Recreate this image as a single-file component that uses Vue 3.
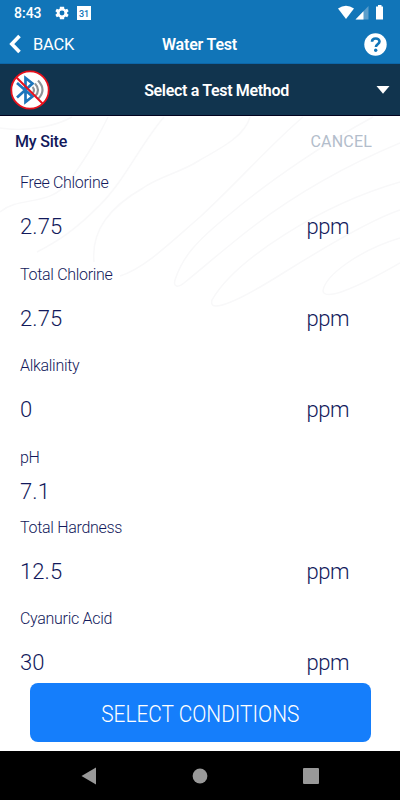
<template>
  <div class="screen">
    <div class="status-bar">
      <span class="clock">8:43</span>
      <svg class="gear" width="14" height="14" viewBox="2 2 20 20">
        <path fill="#fff" fill-rule="evenodd" d="M19.4 13a7.5 7.5 0 0 0 0-2l2.1-1.600-2-3.500-2.500 1a7.500 7.500 0 0 0-1.700-1L15 3.200H9L8.700 5.900a7.500 7.500 0 0 0-1.700 1l-2.500-1-2 3.500L4.600 11a7.500 7.500 0 0 0 0 2l-2.100 1.600 2 3.500 2.500-1a7.500 7.500 0 0 0 1.700 1l.3 2.700h6l.3-2.700a7.500 7.500 0 0 0 1.700-1l2.500 1 2-3.500zM12 8.500a3.500 3.500 0 1 1 0 7 3.500 3.500 0 0 1 0-7z" />
      </svg>
      <span class="calendar">31</span>
      <svg class="signals" width="48" height="16" viewBox="0 0 48 16">
        <path fill="#fff" d="M0 3.500Q8 -2.200 16 3.500L8 14z" />
        <path fill="#5c9ecb" d="M30.500 1v13.500H17.500z" />
        <path fill="#fff" d="M25.500 6.300v8.200h-8z" />
        <path fill="#fff" d="M38 1.500h2V0h3.500v1.500h1.500v13h-7z" />
      </svg>
    </div>

    <header class="nav-bar">
      <button class="back">
        <svg width="12" height="20" viewBox="0 0 12 20"><path d="M10.500 2L2.800 10l7.700 8" fill="none" stroke="#fff" stroke-width="3.600" /></svg>
        <span>BACK</span>
      </button>
      <h1>Water Test</h1>
      <button class="help">
        <svg width="23" height="23" viewBox="0 0 23 23">
          <circle cx="11.500" cy="11.500" r="11.200" fill="#fff" />
          <path d="M8 8.700C8 4.400 15.500 4.400 15.500 8.500c0 2.700-3.600 2.900-3.600 5.500" fill="none" stroke="#1175b8" stroke-width="2.600" />
          <circle cx="11.700" cy="17.300" r="1.700" fill="#1175b8" />
        </svg>
      </button>
    </header>

    <div class="method-bar">
      <svg class="bluetooth" width="40" height="40" viewBox="0 0 40 40">
        <circle cx="20" cy="20" r="18.700" fill="#fff" stroke="#e8101c" stroke-width="1.800" />
        <path d="M7 13l15.500 13.500-7 5.500V8l7 5.500L7 27.500" fill="none" stroke="#1c75bc" stroke-width="2.700" />
        <g fill="none" stroke="#8d9297" stroke-width="2.100">
          <path d="M22.500 17q3 3 0 6.500" />
          <path d="M25 13.500q6 6.500 0 13" />
          <path d="M28 10.500q9 9.500 0 18.500" />
        </g>
        <path d="M6.800 7.800l26 26" stroke="#e8101c" stroke-width="2" />
      </svg>
      <span class="method-name">Select a Test Method</span>
      <svg class="caret" width="14" height="8" viewBox="0 0 14 8"><path fill="#fff" d="M.5 0h13L7 7.800z" /></svg>
    </div>

    <main class="content">
      <svg class="contours" width="400" height="220" viewBox="0 116 400 220">
        <path v-for="d in contours" :key="d" :d="d" />
      </svg>
      <div class="site-row">
        <strong>My Site</strong>
        <button class="cancel">CANCEL</button>
      </div>
      <section v-for="r in readings" :key="r.label" class="reading" :class="{ compact: !r.unit }">
        <label>{{ r.label }}</label>
        <div class="value-row">
          <span class="value">{{ r.value }}</span>
          <span v-if="r.unit" class="unit">{{ r.unit }}</span>
        </div>
      </section>
    </main>

    <div class="footer">
      <button class="conditions"><span>SELECT CONDITIONS</span></button>
    </div>

    <nav class="system-nav">
      <svg width="16" height="18" viewBox="0 0 16 18"><path d="M15 .5v17L.5 9z" /></svg>
      <svg width="16" height="16" viewBox="0 0 16 16"><circle cx="8" cy="8" r="7.400" /></svg>
      <svg width="16" height="16" viewBox="0 0 16 16"><rect width="16" height="16" rx="1" /></svg>
    </nav>
  </div>
</template>

<script setup>
const readings = [
  { label: 'Free Chlorine', value: '2.75', unit: 'ppm' },
  { label: 'Total Chlorine', value: '2.75', unit: 'ppm' },
  { label: 'Alkalinity', value: '0', unit: 'ppm' },
  { label: 'pH', value: '7.1' },
  { label: 'Total Hardness', value: '12.5', unit: 'ppm' },
  { label: 'Cyanuric Acid', value: '30', unit: 'ppm' }
]

// background contour lines
const contours = [
  'M0 128C30 133 60 124 72 117',
  'M0 212C20 195 50 208 70 180S98 137 108 117',
  'M164 117C140 145 125 180 100 205S60 240 37 252',
  'M250 117C245 135 225 146 200 160C180 173 160 176 143 188C110 207 91 230 94 262',
  'M120 276C145 268 170 243 200 217C240 180 270 145 303 117',
  'M373 117C330 140 270 180 230 214C195 242 182 258 175 280C173 287 178 288 184 283C200 270 215 257 230 245C280 203 340 168 400 143',
  'M400 182C320 205 235 260 212 300C208 315 240 300 280 275S370 220 400 210',
  'M400 238C360 250 325 275 323 291C324 300 350 292 400 263'
]
</script>

<style>
body {
  background: #fff;
}
</style>

<style scoped>
.screen {
  display: flex;
  flex-direction: column;
  width: 400px;
  height: 800px;
  overflow: hidden;
  background: #fff;
  font-family: Roboto, "Open Sans", sans-serif;
  color: #12195b;
}
button {
  border: none;
  padding: 0;
  background: none;
  font-family: inherit;
  color: inherit;
}
svg { display: block; flex: none; }

.status-bar {
  display: flex;
  align-items: center;
  height: 25px;
  padding: 0 14px;
  background: #1175b8;
  color: #fff;
}
.clock { width: 41px; font-size: 14px; font-weight: 500; }
.calendar {
  width: 14px;
  height: 14px;
  margin-left: 8px;
  background: #fff;
  color: #1175b8;
  font-size: 9px;
  font-weight: 500;
  line-height: 16px;
  text-align: center;
}
.signals { margin-left: auto; }

.nav-bar {
  display: grid;
  grid-template-columns: 1fr auto 1fr;
  align-items: center;
  box-sizing: border-box;
  height: 39px;
  padding: 0 13px 0 9px;
  border-bottom: 1px solid #0d66a8;
  background: #1175b8;
  color: #fff;
}
.back { display: flex; align-items: center; gap: 12px; font-size: 16.5px; }
.back span { letter-spacing: -0.2px; }
h1 { margin: 1px 0 0 3px; font-size: 16px; font-weight: 600; letter-spacing: -0.2px; }
.help { justify-self: end; }

.method-bar {
  display: flex;
  align-items: center;
  box-sizing: border-box;
  height: 52px;
  padding: 0 10px;
  border-bottom: 1px solid #02031f;
  background: #11344e;
  color: #fff;
}
.method-name { flex: 1; padding: 2px 0 0 7px; text-align: center; font-size: 16px; font-weight: 600; letter-spacing: -0.33px; }

.content { position: relative; flex: 1; min-height: 0; overflow: hidden; }
.contours { position: absolute; top: 0; left: 0; fill: none; stroke: #f8f8f9; stroke-width: 1.5; }
.site-row {
  position: relative;
  display: flex;
  align-items: center;
  justify-content: space-between;
  height: 49px;
  padding: 1px 28px 0 15px;
  box-sizing: border-box;
}
.site-row strong { font-size: 16px; font-weight: 500; letter-spacing: -0.2px; }
.cancel { font-size: 16px; letter-spacing: 0.2px; color: #b3bdcb; }

.reading { position: relative; margin-bottom: 3.5px; padding: 0 51px 0 20px; font-weight: 300; }
.reading label { display: block; height: 36px; line-height: 36px; font-size: 16px; letter-spacing: -0.3px; }
.value-row { display: flex; align-items: center; justify-content: space-between; height: 51px; margin-bottom: 4.5px; }
.value { font-size: 22px; letter-spacing: 0.1px; }
.unit { font-size: 22px; letter-spacing: -0.5px; }
.compact { margin-bottom: 2px; }
.compact .value-row { height: 32px; margin-bottom: 2px; }
.reading:not(.compact) { margin-bottom: 0; }
.compact { margin-bottom: 0; }

.footer { height: 68px; padding: 0 29px 0 30px; background: #fff; }
.conditions {
  display: block;
  width: 100%;
  height: 59px;
  padding-top: 3px;
  border-radius: 8px;
  background: #157efb;
  color: #fff;
  font-size: 23px;
  font-weight: 300;
}
.conditions span { display: inline-block; transform: scaleX(0.907); }

.system-nav {
  display: flex;
  align-items: center;
  justify-content: center;
  gap: 95px;
  height: 49px;
  background: #000;
  fill: #999;
}
</style>
